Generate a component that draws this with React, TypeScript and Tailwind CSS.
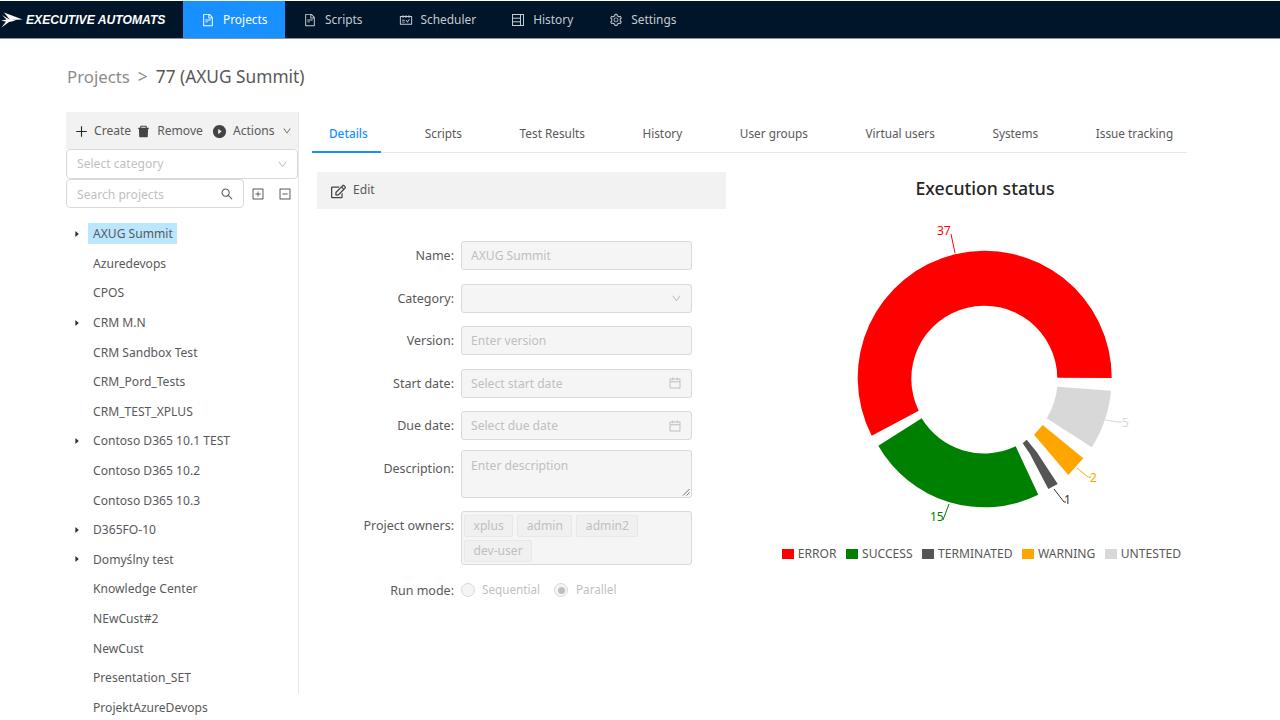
import { ReactNode } from 'react';
import {
  AiFillCaretRight,
  AiFillDelete,
  AiFillPlayCircle,
  AiOutlineCalendar,
  AiOutlineDown,
  AiOutlineFileText,
  AiOutlineMinusSquare,
  AiOutlinePlus,
  AiOutlinePlusSquare,
  AiOutlineSchedule,
  AiOutlineSearch,
  AiOutlineSetting,
} from 'react-icons/ai';
import { FaRegEdit } from 'react-icons/fa';

const projects = [
  { name: 'AXUG Summit', caret: true, selected: true },
  { name: 'Azuredevops' },
  { name: 'CPOS' },
  { name: 'CRM M.N', caret: true },
  { name: 'CRM Sandbox Test' },
  { name: 'CRM_Pord_Tests' },
  { name: 'CRM_TEST_XPLUS' },
  { name: 'Contoso D365 10.1 TEST', caret: true },
  { name: 'Contoso D365 10.2' },
  { name: 'Contoso D365 10.3' },
  { name: 'D365FO-10', caret: true },
  { name: 'Domyślny test', caret: true },
  { name: 'Knowledge Center' },
  { name: 'NEwCust#2' },
  { name: 'NewCust' },
  { name: 'Presentation_SET' },
  { name: 'ProjektAzureDevops' },
];

const tabs = ['Details', 'Scripts', 'Test Results', 'History', 'User groups', 'Virtual users', 'Systems', 'Issue tracking'];

const legend = [
  { label: 'ERROR', color: 'bg-[#ff0000]' },
  { label: 'SUCCESS', color: 'bg-[#008000]' },
  { label: 'TERMINATED', color: 'bg-[#555555]' },
  { label: 'WARNING', color: 'bg-[#ffa500]' },
  { label: 'UNTESTED', color: 'bg-[#d8d8d8]' },
];

function HistoryIcon() {
  return (
    <svg width="14" height="14" viewBox="0 0 14 14" fill="none" stroke="currentColor" strokeWidth="1">
      <rect x="1.5" y="1.5" width="11" height="11" />
      <path d="M1.5 5.2h8M1.5 8.8h8M9.5 1.5v11" />
    </svg>
  );
}

function NavItem({ icon, label, active, className }: { icon: ReactNode; label: string; active?: boolean; className: string }) {
  return (
    <div className={`flex items-center gap-[8px] h-full text-[11.9px] ${active ? 'bg-[#1890ff] text-white' : 'text-[#c5cbd1]'} ${className}`}>
      {icon}
      <span>{label}</span>
    </div>
  );
}

function Logo() {
  return (
    <svg width="22" height="16" viewBox="0 0 22 16" fill="white">
      <path d="M3 0.5 L21.5 7.5 L9 8 Z" />
      <path d="M1 3 L8 7.2 L15 8.4 L8 10 L0.5 15.5 L5 9.6 L0 8.8 L5.5 7.6 Z" />
    </svg>
  );
}

function Row({ label, labelClass, children }: { label: string; labelClass?: string; children: ReactNode }) {
  return (
    <div className="flex items-start">
      <div className={`w-[137px] text-right text-[12.5px] text-[#595959] shrink-0 ${labelClass ?? 'leading-[29px]'}`}>{label}:</div>
      <div className="ml-[7px] w-[231px]">{children}</div>
    </div>
  );
}

function Box({ text, icon }: { text?: string; icon?: ReactNode }) {
  return (
    <div className="h-[29px] flex items-center justify-between px-[9px] bg-[#f5f5f5] border border-[#d9d9d9] rounded-[3px] text-[#bfbfbf]">
      <span className="pt-[2px]">{text}</span>
      {icon}
    </div>
  );
}

function Chart() {
  return (
    <svg width="300" height="320" viewBox="840 210 300 320" className="block">
      <path d="M1111.7 379 A127 127 0 1 0 871.7 436.7 L918.7 411.7 A73 73 0 1 1 1057.3 378.7 Z" fill="#ff0000" />
      <path d="M878.3 446.7 A122 122 0 0 0 1038.3 495.7 L1015.7 447.3 A73 73 0 0 1 921.7 419.3 Z" fill="#008000" />
      <path d="M1026.7 440.7 L1022.7 444.3 L1030 455 L1048.3 490 L1057.7 485 L1036.7 453 Z" fill="#555555" />
      <path d="M1042.7 426 L1034 435.7 L1068.3 476 L1083.3 459.3 Z" fill="#ffa500" />
      <path d="M1111 391.7 L1057.3 387.7 A73 73 0 0 1 1046.7 419.3 L1091.7 448.3 A127 127 0 0 0 1111 391.7 Z" fill="#d8d8d8" />
      <g fill="none" strokeWidth="1">
        <path d="M951 235 L955 254" stroke="#ff0000" />
        <path d="M943 521 L949 505" stroke="#008000" />
        <path d="M1054 490 L1064 503 L1066 503" stroke="#333333" />
        <path d="M1077 469 L1088 478 L1091 478" stroke="#ffa500" />
        <path d="M1105 421 L1118 423 L1122 423" stroke="#d8d8d8" />
      </g>
      <g fontSize="12" fontFamily="'Noto Sans', sans-serif">
        <text x="937" y="236" fill="#ff0000">37</text>
        <text x="930" y="522" fill="#008000">15</text>
        <text x="1064" y="505" fill="#333333">1</text>
        <text x="1090" y="483" fill="#ffa500">2</text>
        <text x="1122" y="428" fill="#d8d8d8">5</text>
      </g>
    </svg>
  );
}

export default function App() {
  return (
    <div className="h-[720px] w-[1280px] overflow-hidden bg-white text-[12.1px] text-[#595959] font-['Noto_Sans',sans-serif]">
      {/* Top nav */}
      <div className="h-[38px] mt-px bg-[#001529] border-b border-[#8a94a0] flex items-center">
        <div className="w-[183px] flex items-center pl-[1px] pt-[2px] gap-[3px]">
          <Logo />
          <span className="font-['Liberation_Sans',sans-serif] font-bold italic text-white text-[12.15px]">EXECUTIVE AUTOMATS</span>
        </div>
        <NavItem active icon={<AiOutlineFileText size={14} />} label="Projects" className="w-[102px] pl-[18px]" />
        <NavItem icon={<AiOutlineFileText size={14} />} label="Scripts" className="ml-[18px]" />
        <NavItem icon={<AiOutlineSchedule size={14} />} label="Scheduler" className="ml-[36px]" />
        <NavItem icon={<HistoryIcon />} label="History" className="ml-[35px]" />
        <NavItem icon={<AiOutlineSetting size={14} />} label="Settings" className="ml-[36px]" />
      </div>

      {/* Breadcrumb */}
      <div className="h-[73px] pl-[67px] pt-[25px] flex items-start text-[17.3px] leading-[26px]">
        <span className="text-[#8c8c8c] text-[16.8px]">Projects</span>
        <span className="text-[#8c8c8c] mx-[8px]">&gt;</span>
        <span className="text-[#595959]">77 (AXUG Summit)</span>
      </div>

      <div className="flex items-start">
        {/* Left column */}
        <div className="ml-[66px] w-[233px] h-[582px] border-r border-[#e8e8e8] shrink-0">
          <div className="h-[37px] bg-[#f2f2f2] flex items-center text-[#595959] pt-px">
            <AiOutlinePlus size={15} className="ml-[8px] text-[#262626]" />
            <span className="ml-[5px]">Create</span>
            <AiFillDelete size={15} className="ml-[5px] text-[#444444]" />
            <span className="ml-[6px]">Remove</span>
            <AiFillPlayCircle size={15} className="ml-[9px] text-[#444444]" />
            <span className="ml-[6px]">Actions</span>
            <AiOutlineDown size={10} className="ml-[7px]" />
          </div>
          <div className="h-[30px] w-[232px] border border-[#d9d9d9] rounded-[4px] flex items-center justify-between pl-[10px] pr-[9px] text-[#bfbfbf]">
            <span>Select category</span>
            <AiOutlineDown size={11} />
          </div>
          <div className="flex items-center">
            <div className="h-[29px] w-[178px] border border-[#d9d9d9] rounded-[4px] flex items-center justify-between pl-[10px] pr-[9px] text-[#bfbfbf]">
              <span className="pt-[3px]">Search projects</span>
              <AiOutlineSearch size={14} className="text-[#595959]" />
            </div>
            <AiOutlinePlusSquare size={14} className="ml-[7px]" />
            <AiOutlineMinusSquare size={14} className="ml-[13px]" />
          </div>
          <div className="mt-[11px]">
            {projects.map(project => (
              <div key={project.name} className="h-[29.6px] flex items-center">
                <div className="w-[22px] flex justify-end pr-[7px]">
                  {project.caret && <AiFillCaretRight size={8} className="text-[#333333]" />}
                </div>
                <span className={`pl-[5px] pr-[4px] h-[21px] leading-[21px] whitespace-nowrap ${project.selected ? 'bg-[#bae7ff]' : ''}`}>
                  {project.name}
                </span>
              </div>
            ))}
          </div>
        </div>

        {/* Right side */}
        <div className="ml-[13px] w-[875px] shrink-0">
          <div className="h-[41px] border-b border-[#e8e8e8] flex text-[11.8px]">
            {tabs.map((tab, idx) => (
              <div
                key={tab}
                className={`h-[41px] pl-[17px] pt-[13px] whitespace-nowrap ${idx === 0 ? 'pr-[13px] mr-[27px] text-[#1890ff] font-medium border-b-2 border-[#1890ff]' : 'pr-[17px] mr-[23.6px]'}`}
              >
                {tab}
              </div>
            ))}
          </div>

          <div className="flex items-start">
            <div className="ml-[5px] w-[409px] mt-[19px] shrink-0">
              <div className="h-[37px] bg-[#f2f2f2] flex items-center pl-[14px] gap-[7px]">
                <FaRegEdit size={15} className="text-[#444444] mt-[2px]" />
                <span>Edit</span>
              </div>
              <div className="mt-[32px] flex flex-col gap-[13.5px]">
                <Row label="Name"><Box text="AXUG Summit" /></Row>
                <Row label="Category"><Box icon={<AiOutlineDown size={11} />} /></Row>
                <Row label="Version"><Box text="Enter version" /></Row>
                <Row label="Start date"><Box text="Select start date" icon={<AiOutlineCalendar size={14} />} /></Row>
                <Row label="Due date"><Box text="Select due date" icon={<AiOutlineCalendar size={14} />} /></Row>
                <div className="-mt-[4px]">
                  <Row label="Description" labelClass="leading-[29px] pt-[4px]">
                    <div className="relative h-[48px] px-[9px] pt-[6px] bg-[#f5f5f5] border border-[#d9d9d9] rounded-[3px] text-[#bfbfbf]">
                      Enter description
                      <svg width="8" height="8" viewBox="0 0 8 8" className="absolute right-px bottom-px" stroke="#777777" fill="none">
                        <path d="M1 7.5 L7.5 1 M4.5 7.5 L7.5 4.5" />
                      </svg>
                    </div>
                  </Row>
                </div>
                <Row label="Project owners">
                  <div className="h-[54px] pl-[2px] pt-[3px] bg-[#f5f5f5] border border-[#d9d9d9] rounded-[3px] flex flex-wrap gap-x-[4px] gap-y-[3px] content-start text-[#bfbfbf]">
                    {['xplus', 'admin', 'admin2', 'dev-user'].map(owner => (
                      <span key={owner} className="h-[22px] leading-[20px] px-[8.5px] bg-[#f0f0f0] border border-[#e8e8e8] rounded-[2px]">
                        {owner}
                      </span>
                    ))}
                  </div>
                </Row>
                <Row label="Run mode" labelClass="leading-[23px]">
                  <div className="h-[23px] flex items-center text-[11.7px] text-[#bfbfbf]">
                    <span className="w-[14px] h-[14px] rounded-full bg-[#f5f5f5] border border-[#d9d9d9]" />
                    <span className="ml-[7px]">Sequential</span>
                    <span className="ml-[14px] w-[14px] h-[14px] rounded-full bg-[#f5f5f5] border border-[#d9d9d9] flex items-center justify-center">
                      <span className="w-[7px] h-[7px] rounded-full bg-[#bfbfbf]" />
                    </span>
                    <span className="ml-[8px]">Parallel</span>
                  </div>
                </Row>
              </div>
            </div>

            <div className="ml-[29px] w-[460px] shrink-0 flex flex-col items-center pt-[21px]">
              <div className="text-[17.7px] font-medium text-[#262626] leading-[28px]">Execution status</div>
              <div className="mt-[7px] ml-[10px]">
                <Chart />
              </div>
              <div className="mt-[16px] -ml-[7px] flex items-center">
                {legend.map(item => (
                  <div key={item.label} className="flex items-center mr-[9.5px] last:mr-0">
                    <span className={`w-[12px] h-[10px] mr-[4px] ${item.color}`} />
                    <span>{item.label}</span>
                  </div>
                ))}
              </div>
            </div>
          </div>
        </div>
      </div>
    </div>
  );
}
